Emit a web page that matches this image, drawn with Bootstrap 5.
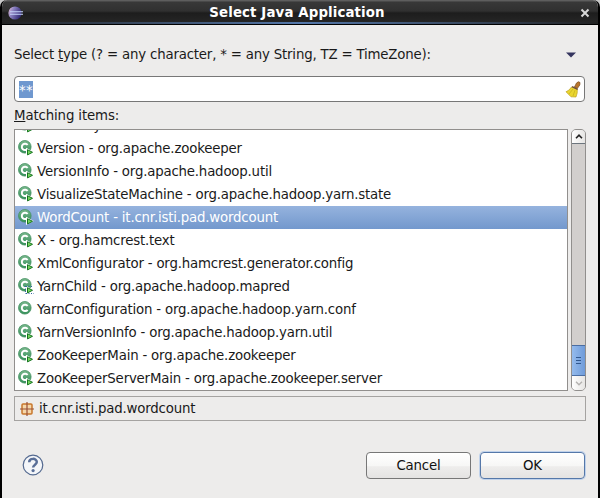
<!DOCTYPE html>
<html lang="en">
<head>
<meta charset="utf-8">
<title>Select Java Application</title>
<link href="https://cdn.jsdelivr.net/npm/bootstrap@5.3.0/dist/css/bootstrap.min.css" rel="stylesheet">
<style>
body{margin:0;background:#c8c8c8;overflow:hidden;font:13.33px/23px "DejaVu Sans",sans-serif;letter-spacing:-.19px;color:#1a1a1a}
.win{width:600px;height:498px;background:#edeceb;border:solid #000;border-width:0 2px 0 2px;border-radius:7px 7px 0 0;overflow:hidden}
.titlebar{height:25px;background:linear-gradient(#626262 0,#5a5a5a 1px,#383838 2px,#303030 11px,#1d1d1d 13px,#252525 22px);color:#fff;font-weight:700;line-height:25px;letter-spacing:.13px;padding:1px 8px 0 5px;border-bottom:1px solid #000;position:relative}
.titlebar::after{content:"";position:absolute;left:0;right:0;bottom:0;height:2px;background:linear-gradient(90deg,#222,#5478ab 50%,#222)}
.titlebar span{margin-left:-9px}
.content{padding:0 13px 0 12px}
.prompt{height:51px;padding-top:15px}
.prompt svg{margin:2px 9px 0 0}
.query{height:26px;border:1px solid #777;border-radius:4px;background:#fff;padding:0 3px 0 4px}
.picked{background:#6f98cf;color:#fff;height:17px;line-height:19px;width:14px;letter-spacing:.3px}
.caption{height:27px;line-height:27px;letter-spacing:-.13px}
.listwrap{width:572px}
.items{width:554px;height:262px;border:1px solid #918f8d;background:#fff}
.items .item{height:23px;flex:none;padding-left:3px;white-space:nowrap}
.item svg{width:16px;height:16px;margin-right:3px;margin-top:-1px}
.item.sel{background:linear-gradient(#95b3de,#7398cd);color:#fff}
.first{margin-top:-16px}
.scroll{width:15px;height:262px;border:1px solid #918f8d;border-radius:5px;background:#d2cfcd;overflow:hidden;margin-left:3px}
.sbtn{height:14px;background:linear-gradient(90deg,#fff,#e6e5e3)}
.thumb{height:31px;border:solid #4a6ea3;border-width:1px 0;background:linear-gradient(90deg,#94bbed,#6f9bd9)}
.status{height:25px;border:1px solid #a5a3a1;margin-top:5px;padding-left:5px;width:572px}
.status svg{margin-right:5px}
.foot{margin-top:30px;gap:9px}
.foot svg{margin-top:-1px}
.dbtn{width:105px;height:27px;margin-top:1px;padding:0;border:1px solid #777;border-radius:4px;font-size:13.33px;letter-spacing:-.19px;line-height:25px;color:#111;background:linear-gradient(#fff,#f7f7f6 50%,#eeedec 55%,#e4e3e2)}
.dbtn.main{border-color:#5578a9;box-shadow:0 0 0 1px #c0d2eb}
</style>
<script src="https://cdn.jsdelivr.net/npm/bootstrap@5.3.0/dist/js/bootstrap.bundle.min.js"></script>
</head>
<body>
<svg width="0" height="0" class="position-absolute">
<defs>
<linearGradient id="cg" x2="0" y2="1"><stop stop-color="#7bb88e"/><stop offset="1" stop-color="#34905a"/></linearGradient>
<linearGradient id="eg" x2="1" y2=".4"><stop stop-color="#ecc4da"/><stop offset=".4" stop-color="#8c82c2"/><stop offset="1" stop-color="#352c78"/></linearGradient>
</defs>
<symbol id="cls" viewBox="0 0 16 16"><circle cx="6.8" cy="6.8" r="6.3" fill="url(#cg)" stroke="#43905f" stroke-width=".8"/><path d="M9.6 5A3.2 3.2 0 1 0 9.6 8.8" fill="none" stroke="#fff" stroke-width="2"/></symbol>
<symbol id="run" viewBox="0 0 16 16"><use href="#cls"/><path d="M8 7.8L15.8 12 8 16z" fill="#fff"/><path d="M9.5 9.7L14.5 12.3 9.5 14.9z" fill="#75d65c" stroke="#167321"/></symbol>
</svg>
<div class="win">
<div class="titlebar d-flex align-items-center justify-content-between">
<svg width="16" height="14" viewBox="0 0 16 14"><circle cx="8" cy="7" r="6.6" fill="url(#eg)"/><path d="M3 5.8h13M3 8.3h13" stroke="#c5d4fb" stroke-width="1.1"/></svg>
<span>Select Java Application</span>
<svg width="10" height="10" viewBox="0 0 10 10"><path d="M1.5 1.5l7 7m0-7l-7 7" stroke="#d8d8d8" stroke-width="2"/></svg>
</div>
<div class="content">
<div class="prompt d-flex align-items-center justify-content-between pb-2"><span>Select <u>t</u>ype (? = any character, * = any String, TZ = TimeZone):</span>
<svg width="10" height="6" viewBox="0 0 10 6"><path d="M0 .5h10L5 5.5z" fill="#35355f"/></svg></div>
<div class="query d-flex align-items-center justify-content-between"><span class="picked">**</span>
<svg width="16" height="17" viewBox="0 0 16 17"><path d="M9.5 6L11.5 2Q13.5-.2 15 1.5L14.8 4 12.3 7.5z" fill="#b9772c" stroke="#7b4c20" stroke-width=".7"/><path d="M6.5 6Q4.5 9.5 1 10.8L6 15.8 11 16Q12.7 12 12.3 8.3z" fill="#ead630" stroke="#bda022" stroke-width=".7"/><path d="M7 5.6l5.7 2.8" stroke="#70503a" stroke-width="1.5"/><path d="M8 8L4 13M10 9.2L8 15" stroke="#c4ad1c" stroke-width=".7"/></svg></div>
<div class="caption"><u>M</u>atching items:</div>
<div class="listwrap d-flex">
<div class="items d-flex flex-column overflow-hidden">
<div class="item first d-flex align-items-center"><svg><use href="#run"/></svg><span>UserEntry</span></div>
<div class="item d-flex align-items-center"><svg><use href="#run"/></svg><span>Version - org.apache.zookeeper</span></div>
<div class="item d-flex align-items-center"><svg><use href="#run"/></svg><span>VersionInfo - org.apache.hadoop.util</span></div>
<div class="item d-flex align-items-center"><svg><use href="#run"/></svg><span>VisualizeStateMachine - org.apache.hadoop.yarn.state</span></div>
<div class="item sel d-flex align-items-center"><svg><use href="#run"/></svg><span>WordCount - it.cnr.isti.pad.wordcount</span></div>
<div class="item d-flex align-items-center"><svg><use href="#run"/></svg><span>X - org.hamcrest.text</span></div>
<div class="item d-flex align-items-center"><svg><use href="#run"/></svg><span>XmlConfigurator - org.hamcrest.generator.config</span></div>
<div class="item d-flex align-items-center"><svg viewBox="0 0 16 16"><use href="#run"/><path d="M7.5 8v8M8 8.5h7.5M8 15.5h8" stroke="#3465a4" stroke-dasharray="1 1.5"/></svg><span>YarnChild - org.apache.hadoop.mapred</span></div>
<div class="item d-flex align-items-center"><svg><use href="#cls"/></svg><span>YarnConfiguration - org.apache.hadoop.yarn.conf</span></div>
<div class="item d-flex align-items-center"><svg><use href="#run"/></svg><span>YarnVersionInfo - org.apache.hadoop.yarn.util</span></div>
<div class="item d-flex align-items-center"><svg><use href="#run"/></svg><span>ZooKeeperMain - org.apache.zookeeper</span></div>
<div class="item d-flex align-items-center"><svg><use href="#run"/></svg><span>ZooKeeperServerMain - org.apache.zookeeper.server</span></div>
</div>
<div class="scroll d-flex flex-column flex-shrink-0">
<div class="sbtn d-flex align-items-center justify-content-center border-bottom border-secondary"><svg width="8" height="5"><path d="M1 4.2L4 1.2 7 4.2" fill="none" stroke="#222" stroke-width="1.6"/></svg></div>
<div class="flex-grow-1"></div>
<div class="thumb d-flex align-items-center justify-content-center"><svg width="5" height="8"><path d="M0 .5h5M0 3.5h5M0 6.5h5" stroke="#31588f"/></svg></div>
<div class="sbtn d-flex align-items-center justify-content-center"><svg width="8" height="5"><path d="M1 .8L4 3.8 7 .8" fill="none" stroke="#b5b3b1" stroke-width="1.4"/></svg></div>
</div>
</div>
<div class="status d-flex align-items-center"><svg width="14" height="14" viewBox="0 0 14 14"><rect x="2" y="2" width="10" height="10" rx="1" fill="#f5d7ab" stroke="#c8772d" stroke-width="1.5"/><path d="M7 0v14M0 7h14" stroke="#995037" stroke-width="1.2"/></svg><span>it.cnr.isti.pad.wordcount</span></div>
<div class="foot d-flex align-items-center">
<svg width="22" height="22" class="ms-2" viewBox="0 0 22 22"><circle cx="11" cy="11" r="9.8" fill="#f4f6f9" stroke="#53698f" stroke-width="1.2"/><path d="M7.2 8.2C7.2 3.8 14.8 3.8 14.8 8 14.8 10.6 11.1 10.8 11.1 13.6" fill="none" stroke="#596f98" stroke-width="2.5"/><circle cx="11.1" cy="16.6" r="1.6" fill="#596f98"/></svg>
<button class="btn dbtn ms-auto">Cancel</button><button class="btn dbtn main">OK</button>
</div>
</div>
</div>
</body>
</html>
